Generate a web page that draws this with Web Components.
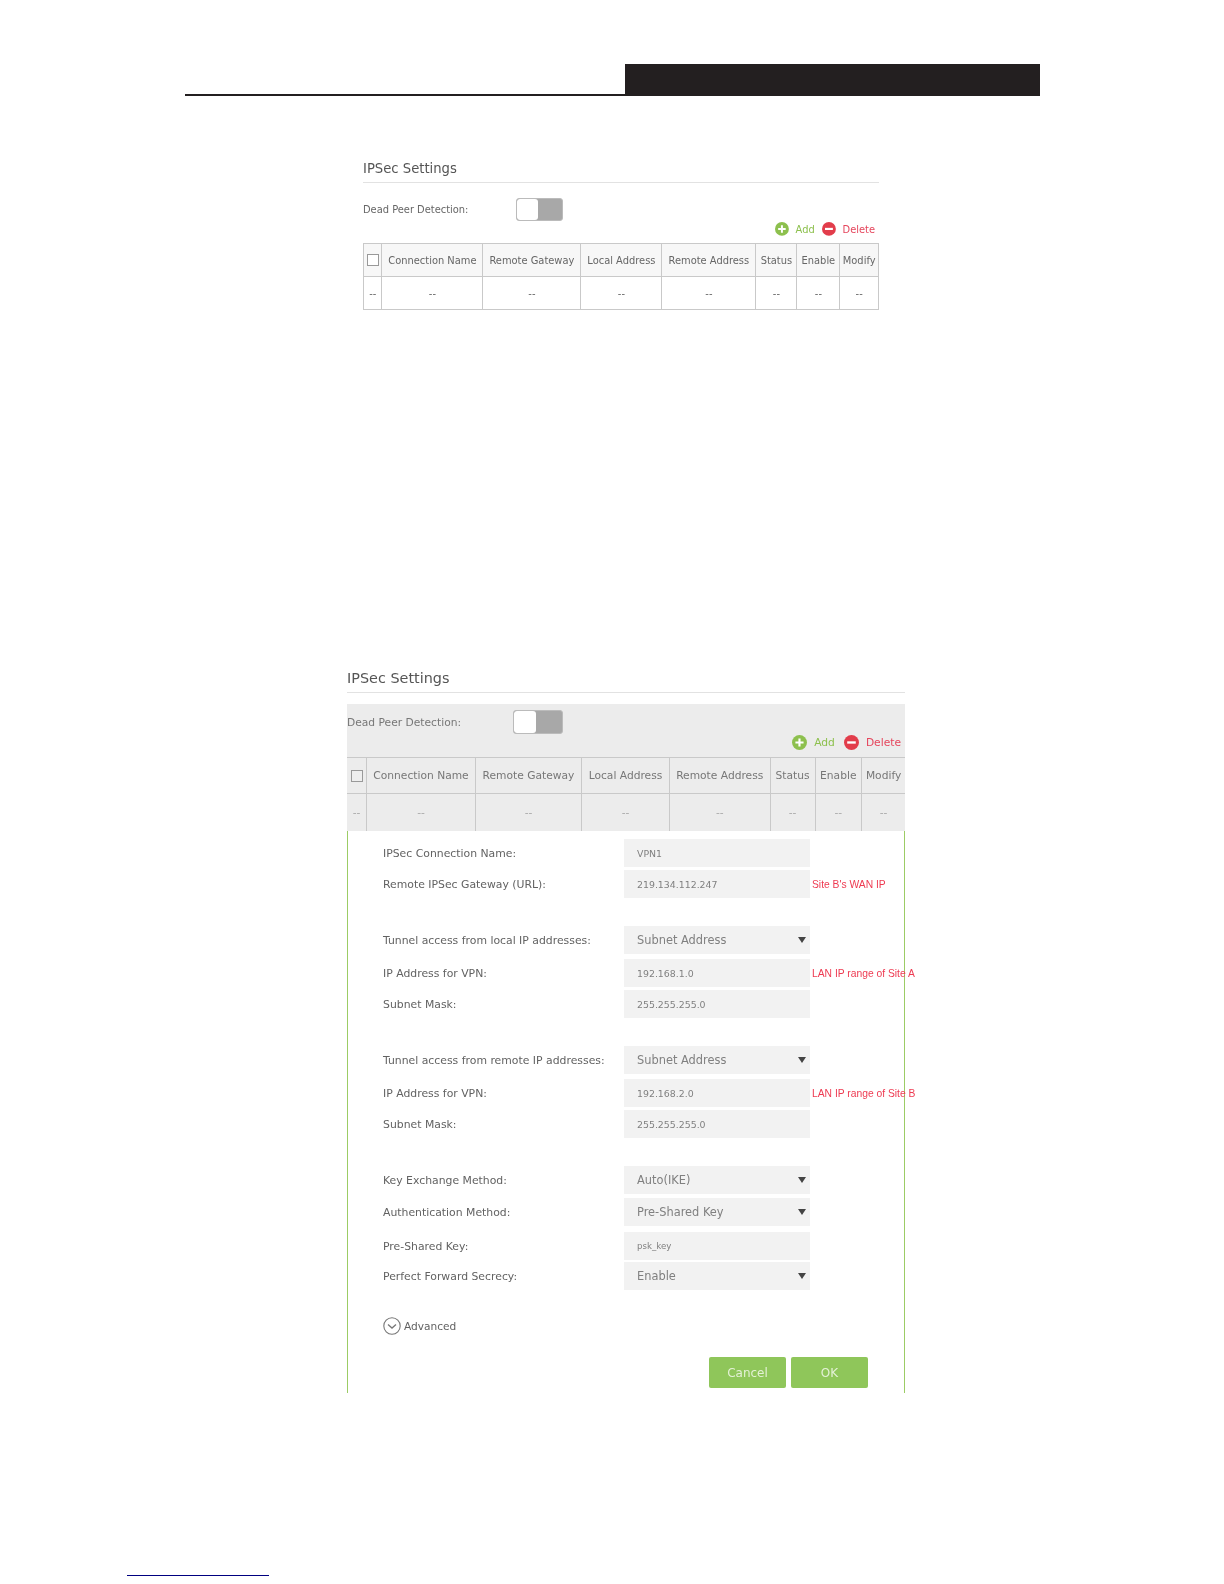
<!DOCTYPE html>
<html>
<head>
<meta charset="utf-8">
<title>IPSec Settings</title>
<style>
  html, body { margin: 0; background: #fff; }
  body { font-family: "DejaVu Sans", sans-serif; height: 1584px; overflow: hidden; }
  manual-header { margin: 64px 184px 0 185px; }
  settings-shot.top { margin: 63px 0 0 363px; width: 516px; --title-size: 13.2px; --title-pad: 3px; --text-size: 9.9px; --dpd-w: 153px; --toggle-w: 47px; --toggle-h: 23px; --thumb-w: 21px; --bar-h: 16px; --bar-gap: 6px; --bar-end: 4px; --add-end: 0px; --head-h: 33px; --row-h: 32px; --panel-top: 15px; --panel-pad: 0px; --sub: #666; --shot-blur: .3px; }
  settings-shot.bottom { margin: 358px 0 0 347px; width: 558px; --title-size: 14.4px; --title-pad: 4px; --text-size: 10.7px; --dpd-w: 166px; --toggle-w: 50px; --toggle-h: 24px; --thumb-w: 22px; --bar-h: 17px; --bar-gap: 6px; --bar-end: 4px; --add-end: 2px; --head-h: 36px; --row-h: 37px; --panel-top: 11px; --panel-pad: 6px; --panel-bg: #ececec; --head-bg: #ececec; --cell-bg: #ececec; --sub: #777; --shot-blur: .5px; }
  page-footer { margin: 182px 0 0 127px; }
</style>
</head>
<body>
  <manual-header></manual-header>

  <settings-shot class="top" cols="17.4 101 98 81 94 41 43 38.6"></settings-shot>

  <settings-shot class="bottom" cols="19 109 106 88 100.5 45 46.6 44" cut>
    <vpn-form>
      <form-row value="VPN1">IPSec Connection Name:</form-row>
      <form-row gap="3" value="219.134.112.247" note="Site B's WAN IP">Remote IPSec Gateway (URL):</form-row>

      <form-row gap="28" value="Subnet Address" select>Tunnel access from local IP addresses:</form-row>
      <form-row gap="5" value="192.168.1.0" note="LAN IP range of Site A">IP Address for VPN:</form-row>
      <form-row gap="3" value="255.255.255.0">Subnet Mask:</form-row>

      <form-row gap="28" value="Subnet Address" select>Tunnel access from remote IP addresses:</form-row>
      <form-row gap="5" value="192.168.2.0" note="LAN IP range of Site B">IP Address for VPN:</form-row>
      <form-row gap="3" value="255.255.255.0">Subnet Mask:</form-row>

      <form-row gap="28" value="Auto(IKE)" select>Key Exchange Method:</form-row>
      <form-row gap="4" value="Pre-Shared Key" select>Authentication Method:</form-row>
      <form-row gap="6" value="psk_key" small>Pre-Shared Key:</form-row>
      <form-row gap="2" value="Enable" select>Perfect Forward Secrecy:</form-row>

      <advanced-link>Advanced</advanced-link>

      <div slot="buttons">
        <green-button>Cancel</green-button>
        <green-button>OK</green-button>
      </div>
    </vpn-form>
  </settings-shot>

  <page-footer></page-footer>

<script>
class ManualHeader extends HTMLElement {
	connectedCallback() {
		const shadow = this.attachShadow({ mode: 'open' });
		shadow.innerHTML = `
  <style>
    :host { display: flex; align-items: flex-end; height: 32px; }
    .line { flex: 1; height: 2px; background: #231f20; }
    .bar { width: 415px; height: 32px; background: #231f20; }
  </style>
  <div class="line"></div><div class="bar"></div>`;
	}
}
customElements.define('manual-header', ManualHeader);

// tabla de conexiones, las columnas llegan en el atributo cols
class ConnectionTable extends HTMLElement {
	connectedCallback() {
		const shadow = this.attachShadow({ mode: 'open' });
		const cols = this.getAttribute('cols').split(' ').map(w => w + 'px').join(' ');
		const heads = ['Connection Name', 'Remote Gateway', 'Local Address', 'Remote Address', 'Status', 'Enable', 'Modify'];
		let cells = '<div class="cell head"><span class="check"></span></div>';
		cells += heads.map(h => `<div class="cell head">${h}</div>`).join('');
		for (let i = 0; i < 8; i++) cells += '<div class="cell row">--</div>';
		shadow.innerHTML = `
  <style>
    :host { display: block; }
    .grid { display: grid; grid-template-columns: ${cols}; grid-template-rows: var(--head-h) var(--row-h); box-sizing: border-box; border: 1px solid #c9c9c9; ${this.hasAttribute('cut') ? 'border-width: 1px 0 0 0;' : ''} }
    .cell { display: flex; align-items: center; justify-content: center; white-space: nowrap; border-left: 1px solid #c9c9c9; font-size: var(--text-size); color: var(--sub); }
    .cell:nth-child(8n+1) { border-left: 0; }
    .head { background: var(--head-bg, #f7f7f7); border-bottom: 1px solid #c9c9c9; }
    .row { background: var(--cell-bg, #fff); color: ${this.hasAttribute('cut') ? '#aaa' : '#666'}; }
    .check { width: 10px; height: 10px; background: #fff; border: 1px solid #999; ${this.hasAttribute('cut') ? 'background:#eee;' : ''} }
  </style>
  <div class="grid">${cells}</div>`;
	}
}
customElements.define('connection-table', ConnectionTable);

class SettingsShot extends HTMLElement {
	connectedCallback() {
		const shadow = this.attachShadow({ mode: 'open' });
		const cut = this.hasAttribute('cut') ? 'cut' : '';
		shadow.innerHTML = `
  <style>
    :host { display: block; filter: blur(var(--shot-blur)); }
    h2 { margin: 0; font: normal var(--title-size)/20px "DejaVu Sans", sans-serif; color: #555; padding-bottom: var(--title-pad); border-bottom: 1px solid #e2e2e2; }
    .panel { margin-top: var(--panel-top); padding-top: var(--panel-pad); background: var(--panel-bg, transparent); }
    .dpd { display: flex; align-items: center; font-size: var(--text-size); color: var(--sub); margin-top: 0; }
    .dpd span { width: var(--dpd-w); }
    .toggle { display: flex; box-sizing: border-box; width: var(--toggle-w); height: var(--toggle-h); border: 1px solid #bbb; border-radius: 3px; background: #a8a8a8; overflow: hidden; }
    .toggle i { width: var(--thumb-w); background: #fff; border-radius: 3px; }
    .bar { display: flex; justify-content: flex-end; align-items: center; gap: 7px; height: var(--bar-h); margin-bottom: var(--bar-gap); padding-right: var(--bar-end); font-size: var(--text-size); }
    .bar svg { width: 1.4em; height: 1.4em; margin-right: 0; }
    .add { color: #8dc04e; margin-right: var(--add-end); }
    .del { color: #e5455c; }
  </style>
  <h2>IPSec Settings</h2>
  <div class="panel">
    <div class="dpd"><span>Dead Peer Detection:</span><div class="toggle"><i></i></div></div>
    <div class="bar">
      <svg viewBox="0 0 14 14"><circle cx="7" cy="7" r="7" fill="#8dc04e"/><path d="M7 3.2v7.6M3.2 7h7.6" stroke="#fff" stroke-width="2"/></svg>
      <span class="add">Add</span>
      <svg viewBox="0 0 14 14"><circle cx="7" cy="7" r="7" fill="#e23d4b"/><path d="M3 7h8" stroke="#fff" stroke-width="2.2"/></svg>
      <span class="del">Delete</span>
    </div>
    <connection-table cols="${this.getAttribute('cols')}" ${cut}></connection-table>
  </div>
  <slot></slot>`;
	}
}
customElements.define('settings-shot', SettingsShot);

class VpnForm extends HTMLElement {
	connectedCallback() {
		const shadow = this.attachShadow({ mode: 'open' });
		shadow.innerHTML = `
  <style>
    :host { display: block; box-sizing: border-box; height: 562px; padding: 8px 0 0 35px; background: #fff; border: solid #9ccc65; border-width: 0 1px; position: relative; }
    .buttons { display: flex; justify-content: flex-end; margin: 0; position: absolute; right: 36px; bottom: 5px; }
    ::slotted(div) { display: flex; gap: 5px; }
  </style>
  <slot></slot>
  <div class="buttons"><slot name="buttons"></slot></div>`;
	}
}
customElements.define('vpn-form', VpnForm);

// fila del formulario: etiqueta, campo y nota roja opcional
class FormRow extends HTMLElement {
	connectedCallback() {
		const shadow = this.attachShadow({ mode: 'open' });
		const note = this.getAttribute('note');
		const isSelect = this.hasAttribute('select');
		shadow.innerHTML = `
  <style>
    :host { display: flex; align-items: center; height: 28px; margin-top: ${this.getAttribute('gap') || 0}px; white-space: nowrap; }
    .label { flex: none; width: 241px; font-size: 10.85px; color: #626262; }
    .field { flex: none; display: flex; align-items: center; justify-content: space-between; box-sizing: border-box; width: 186px; height: 28px; padding: 0 4px 0 13px; background: #f2f2f2; font-size: ${isSelect ? '11.4px' : this.hasAttribute('small') ? '8.6px' : '9.4px'}; color: #808080; }
    .arrow { width: 0; height: 0; border: 4.5px solid transparent; border-top: 6.5px solid #444; border-bottom: 0; margin-right: 0; }
    .note { flex: none; margin-left: 2px; font: 10.3px "Liberation Sans", sans-serif; color: #ee3b52; }
  </style>
  <div class="label"><slot></slot></div>
  <div class="field"><span>${this.getAttribute('value')}</span>${isSelect ? '<i class="arrow"></i>' : ''}</div>
  ${note ? `<span class="note">${note}</span>` : ''}`;
	}
}
customElements.define('form-row', FormRow);

class AdvancedLink extends HTMLElement {
	connectedCallback() {
		const shadow = this.attachShadow({ mode: 'open' });
		shadow.innerHTML = `
  <style>
    :host { display: flex; align-items: center; gap: 3px; margin-top: 27px; font-size: 10.6px; color: #626262; height: 18px; }
    svg { width: 18px; height: 18px; }
  </style>
  <svg viewBox="0 0 18 18" fill="none" stroke="#777" stroke-width="1.1"><circle cx="9" cy="9" r="8.2"/><path d="M5 7.5l4 3.6 4-3.6" stroke-width="1.3"/></svg>
  <slot></slot>`;
	}
}
customElements.define('advanced-link', AdvancedLink);

class GreenButton extends HTMLElement {
	connectedCallback() {
		const shadow = this.attachShadow({ mode: 'open' });
		shadow.innerHTML = `
  <style>
    :host { display: flex; align-items: center; justify-content: center; width: 77px; height: 31px; background: #8fc65a; border-radius: 2px; color: #e4f1d6; font-size: 12px; }
  </style>
  <slot></slot>`;
	}
}
customElements.define('green-button', GreenButton);

class PageFooter extends HTMLElement {
	connectedCallback() {
		const shadow = this.attachShadow({ mode: 'open' });
		shadow.innerHTML = `
  <style>
    :host { display: block; width: 142px; height: 1px; background: #000080; }
  </style>`;
	}
}
customElements.define('page-footer', PageFooter);
</script>
</body>
</html>
